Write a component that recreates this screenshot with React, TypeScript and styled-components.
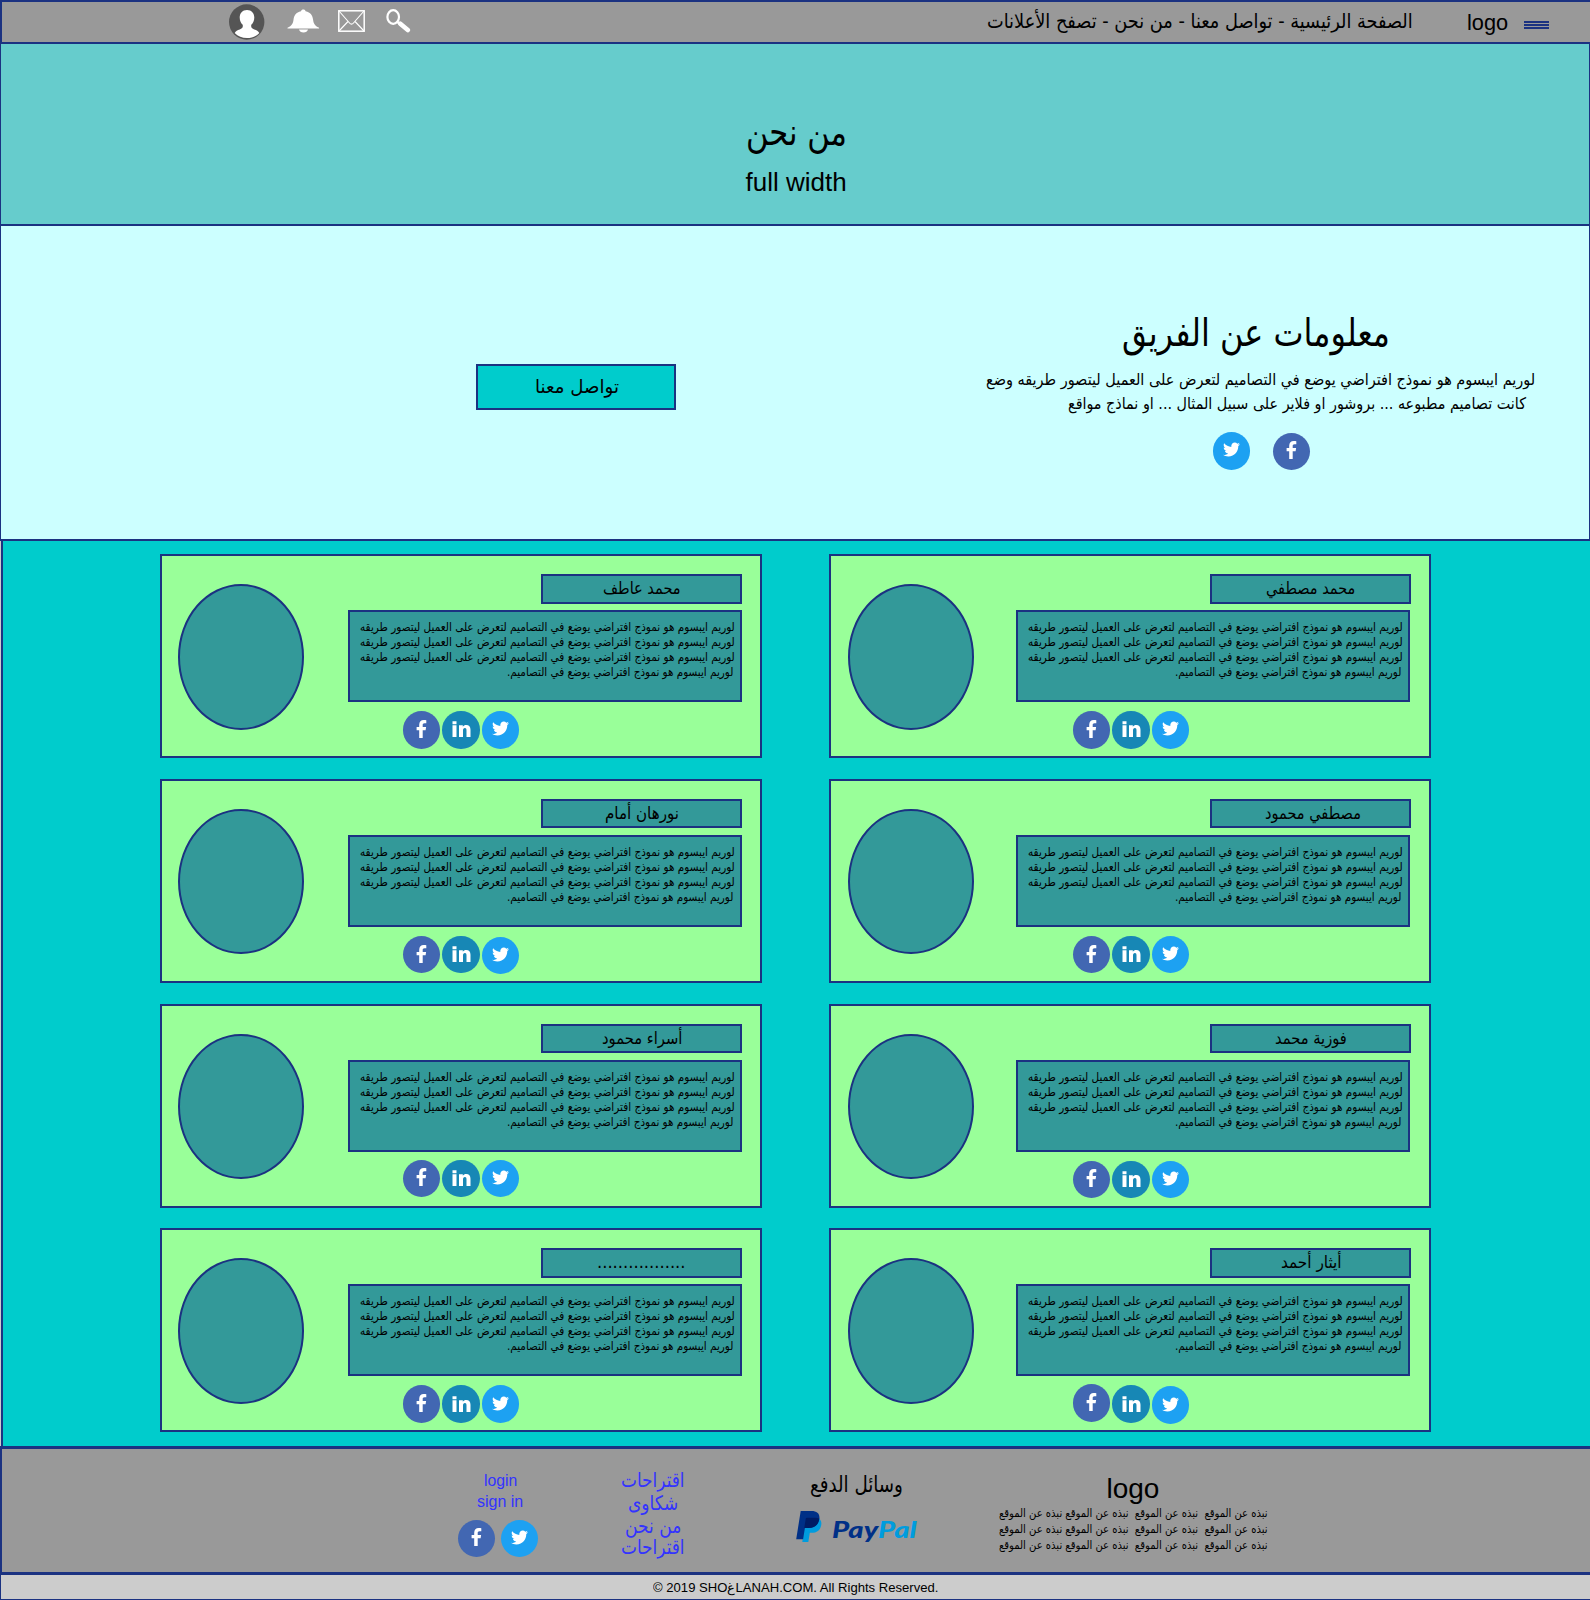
import React, { useLayoutEffect, useRef, useState } from "react";
import styled, { createGlobalStyle, css } from "styled-components";
import { FaTwitter } from "react-icons/fa";

const NAVY = "#1b3281";
const ARABIC = '"DejaVu Sans Condensed", "DejaVu Sans", sans-serif';
const LATIN = '"Liberation Sans", Arial, sans-serif';

const Global = createGlobalStyle`
  * { box-sizing: border-box; }
  body { margin: 0; background: #ccc; }
`;

/* ---------- text fitted to a measure ---------- */

const LineBox = styled.div<{ $w: number; $h: number; $size: number; $latin?: boolean; $color?: string }>`
  width: ${(p) => p.$w}px;
  height: ${(p) => p.$h}px;
  line-height: ${(p) => p.$h}px;
  font-size: ${(p) => p.$size}px;
  font-family: ${(p) => (p.$latin ? LATIN : ARABIC)};
  color: ${(p) => p.$color || "#000"};
  white-space: pre;
  text-align: left;
  flex: none;
`;

const LineInk = styled.span<{ $rtl: boolean }>`
  display: inline-block;
  direction: ${(p) => (p.$rtl ? "rtl" : "ltr")};
  transform-origin: 0 50%;
  vertical-align: top;
`;

type LineProps = {
  w: number;
  h: number;
  size: number;
  latin?: boolean;
  color?: string;
  className?: string;
  children: React.ReactNode;
};

function Line({ w, h, size, latin, color, className, children }: LineProps) {
  const ref = useRef<HTMLSpanElement>(null);
  const [scale, setScale] = useState(1);
  useLayoutEffect(() => {
    const natural = ref.current?.offsetWidth;
    if (natural) setScale(w / natural);
  }, [w, size]);
  return (
    <LineBox className={className} $w={w} $h={h} $size={size} $latin={latin} $color={color}>
      <LineInk ref={ref} $rtl={!latin} style={{ transform: `scaleX(${scale})` }}>
        {children}
      </LineInk>
    </LineBox>
  );
}

/* ---------- page frame ---------- */

const Page = styled.div`
  width: 1590px;
  height: 1600px;
  display: flex;
  flex-direction: column;
  overflow: hidden;
`;

const Header = styled.header`
  height: 44px;
  display: flex;
  align-items: flex-start;
  background: #999;
  border: 2px solid ${NAVY};
  border-right: 0;
`;

const HeaderIcons = styled.div`
  display: flex;
  align-items: flex-start;
  width: 984.5px;
  padding: 2px 0 0 226.5px;
  svg { flex: none; }
`;

const HeaderLogo = styled(Line)`
  margin-left: 54.5px;
`;

const Burger = styled.div`
  margin: 19px 0 0 15px;
  width: 25px;
  display: grid;
  gap: 1px;
  grid-auto-rows: 2px;
`;

const BurgerBar = styled.i`
  background: ${NAVY};
`;

const Hero = styled.section`
  height: 182px;
  padding: 62px 0 0 2px;
  display: flex;
  flex-direction: column;
  align-items: center;
  background: #66cccc;
  border: 1px solid ${NAVY};
  border-width: 0 1px 2px 1px;
`;

const Info = styled.section`
  height: 315px;
  display: flex;
  background: #ccffff;
  border: 1px solid ${NAVY};
  border-width: 0 1px 2px 1px;
`;

const ContactButton = styled.button`
  margin: 138px 0 0 475px;
  width: 200px;
  height: 46px;
  padding: 0 0 0 57px;
  display: flex;
  align-items: flex-start;
  background: #00cccc;
  border: 2px solid ${NAVY};
`;

const Team = styled.div`
  width: 549px;
  margin-left: 310px;
  padding-top: 76px;
`;

const TeamTitle = styled(Line)`
  margin-left: 136px;
`;

const TeamSecond = styled(Line)`
  margin-left: 82px;
`;

const TeamSocial = styled.div`
  display: flex;
  align-items: flex-start;
  gap: 22.5px;
  margin: 15px 0 0 226.5px;
`;

/* ---------- social buttons ---------- */

const BadgeShape = styled.span<{ $bg: string; $drop?: number }>`
  width: 37.5px;
  height: 37.5px;
  flex: none;
  margin-top: ${(p) => p.$drop || 0}px;
  padding: 0 0 2px 0.5px;
  border-radius: 50%;
  display: flex;
  align-items: center;
  justify-content: center;
  color: #fff;
  background: ${(p) => p.$bg};
`;

const Facebook = ({ drop }: { drop?: number }) => (
  <BadgeShape $bg="#4267b2" $drop={drop}>
    <svg width="11" height="18" viewBox="0 0 11 18">
      <path d="M3.200 18V10.200H.6V7h2.600V4.800C3.200 1.700 4.900.1 7.700.1c1.100 0 2 .1 2.600.2v2.900H8.600c-1.500 0-1.900.7-1.900 1.800v2h3.400l-.5 3.200H6.700V18z" fill="#fff" />
    </svg>
  </BadgeShape>
);

const LinkedIn = ({ drop }: { drop?: number }) => (
  <BadgeShape $bg="#1787b5" $drop={drop}>
    <svg width="19" height="17" viewBox="0 0 19 17">
      <path d="M.5 1.200h4v3h-4zM.5 5.200h4V17h-4zM7 5.200h3.800v1.500c.8-1.200 1.900-1.800 3.400-1.800 2.900 0 4.300 1.800 4.300 4.900V17h-4v-6.600c0-1.500-.5-2.300-1.600-2.300-1.300 0-1.900.9-1.900 2.400V17H7z" fill="#fff" />
    </svg>
  </BadgeShape>
);

const Twitter = ({ drop }: { drop?: number }) => (
  <BadgeShape $bg="#1da1f2" $drop={drop}><FaTwitter size={17} /></BadgeShape>
);

/* ---------- members ---------- */

const Members = styled.main`
  height: 905px;
  padding: 13px 0 0 157px;
  margin-left: 1px;
  background: #00cccc;
  border-left: 2px solid ${NAVY};
  display: grid;
  grid-template-columns: 602px 602px;
  grid-auto-rows: 204px;
  gap: 20.8px 67px;
`;

const teal = css`
  background: #339999;
  border: 2px solid ${NAVY};
`;

const Card = styled.article`
  background: #99ff99;
  border: 2px solid ${NAVY};
  display: flex;
  align-items: flex-start;
`;

const Portrait = styled.div<{ $shift: number }>`
  ${teal}
  width: 126px;
  height: 145.5px;
  border-radius: 50%;
  flex: none;
  margin: 28px 0 0 ${(p) => 16 + p.$shift}px;
`;

const Details = styled.div<{ $shift: number }>`
  width: ${(p) => 438 - p.$shift}px;
  display: flex;
  flex-direction: column;
  align-items: flex-end;
  padding-top: 18px;
`;

const NameBox = styled.div<{ $nudge: number }>`
  ${teal}
  width: 201px;
  height: 29.5px;
  padding-left: ${(p) => p.$nudge * 2}px;
  display: flex;
  justify-content: center;
`;

const BioBox = styled.div<{ $shift: number }>`
  ${teal}
  width: 394.5px;
  height: 92px;
  margin: 6.5px ${(p) => p.$shift}px 0 0;
  padding: 8px 5.5px 0 0;
  display: flex;
  flex-direction: column;
  align-items: flex-end;
`;

const BioLast = styled(Line)`
  margin-right: 2px;
`;

const CardSocial = styled.div<{ $shift: number }>`
  display: flex;
  align-items: flex-start;
  gap: 2px;
  margin: 9px ${(p) => 223 - p.$shift}px 0 0;
`;

/* ---------- footer ---------- */

const Footer = styled.footer`
  height: 129px;
  display: flex;
  align-items: flex-start;
  background: #999;
  border: 3px solid ${NAVY};
  border-width: 3px 0 3px 2px;
`;

const Account = styled.div`
  width: 82px;
  margin: 21px 0 0 455px;
`;

const LoginLine = styled(Line)`
  margin-left: 27px;
`;

const SignInLine = styled(Line)`
  margin-left: 20px;
`;

const AccountSocial = styled.div`
  display: flex;
  gap: 5.5px;
  margin: 7.5px 0 0 0.5px;
`;

const Links = styled.nav`
  width: 64px;
  margin: 19px 0 0 82px;
  display: flex;
  flex-direction: column;
  align-items: center;
`;

const Payment = styled.div`
  width: 122px;
  margin: 19px 0 0 111px;
`;

const PaymentTitle = styled(Line)`
  margin-left: 14px;
`;

const PayPal = styled.div`
  display: flex;
  margin-top: 9px;
  align-items: flex-start;
`;

const Wordmark = styled(Line)`
  margin: 7px 0 0 10px;
  font-family: Lato, "Open Sans", sans-serif;
  font-style: italic;
  font-weight: 900;
  em { color: #009cde; }
`;

const About = styled.div`
  width: 269px;
  margin: 24.5px 0 0 81px;
`;

const AboutLogo = styled(Line)`
  margin: 0 0 1.5px 107.5px;
`;

const Legal = styled.div`
  height: 25px;
  display: flex;
  justify-content: center;
  background: #ccc;
  border: 1px solid ${NAVY};
  border-width: 0 0 1px 1px;
`;

/* ---------- drawings ---------- */

const UserIcon = () => (
  <svg width="36" height="36" viewBox="0 0 36 36">
    <circle cx="17.700" cy="18" r="17.700" fill="#555" />
    <path d="M18 6c4.600 0 7.300 3.200 7.300 7.500 0 3.300-1.300 5.900-3 7.300-.5 2.700.4 3.800 3 4.700 2.200.8 4 1.600 5 3.500C27 32.500 23 34 18 34S9 32.500 5.700 29c1-1.900 2.800-2.700 5-3.500 2.600-.9 3.500-2 3-4.700-1.700-1.400-3-4-3-7.300C10.700 9.200 13.400 6 18 6z" fill="#fff" />
  </svg>
);

const BellIcon = () => (
  <svg width="33" height="24" viewBox="0 0 33 24" style={{ margin: "5px 0 0 22.500px" }}>
    <path d="M14 2.300C14.200 1 15.200.4 16.300.4s2.100.6 2.300 1.900c5 1 7 4.300 7.500 8.400.4 3.600 1.500 6 6 8v.9H.5v-.9c4.500-2 5.600-4.400 6-8C7 6.600 9 3.300 14 2.300zM12 20.600h9c-.5 1.800-2.200 2.900-4.500 2.900S12.500 22.400 12 20.600z" fill="#fff" />
  </svg>
);

const MailIcon = () => (
  <svg width="27" height="22" viewBox="0 0 27 22" style={{ margin: "6px 0 0 18px" }} fill="none" stroke="#fff">
    <rect x=".8" y=".8" width="25.400" height="20.400" strokeWidth="1.500" />
    <path d="M1 1l10.500 12c1.300 1.500 2.700 1.500 4 0L26 1M1 21l9-9.500M26 21l-9-9.500" strokeWidth="1.100" />
  </svg>
);

const SearchIcon = () => (
  <svg width="25" height="24" viewBox="0 0 25 24" style={{ margin: "4.500px 0 0 21px" }} fill="none" stroke="#fff">
    <ellipse cx="7.200" cy="8" rx="5.800" ry="6.800" strokeWidth="2.200" />
    <path d="M11.500 13l2.500 2" strokeWidth="2.400" />
    <path d="M14.300 14.800l7.500 6.300" strokeWidth="4.600" strokeLinecap="round" />
  </svg>
);

const PayPalMark = () => (
  <svg width="26" height="32" viewBox="0 0 26 32">
    <path d="M9.500 7h12.800c2.600 1.700 3.500 4.200 2.900 7.200-1 5.200-4.500 7.600-9.700 7.600h-1.700l-1.500 9.200H6.300z" fill="#009cde" />
    <path d="M4.700 0h10.800c5.800 0 8.700 3 7.800 8.300-.9 5.700-4.800 8.700-10.800 8.700H8.900L7.100 28.300H.2z" fill="#003087" />
    <path d="M9.700 7.800c.1-.6.600-1 1.200-1h8.500c1.300 0 2.600.2 3.800.7-.8 6.300-4.700 9.500-10.700 9.500H8.300z" fill="#001c64" />
  </svg>
);

/* ---------- content ---------- */

const BIO = "لوريم ايبسوم هو نموذج افتراضي يوضع في التصاميم لتعرض على العميل ليتصور طريقه";
const BIO_END = "لوريم ايبسوم هو نموذج افتراضي يوضع في التصاميم.";
const ABOUT = "نبذه عن الموقع  نبذه عن الموقع  نبذه عن الموقع نبذه عن الموقع";

type Member = { name: string; w: number; nudge?: number; fb?: number; li?: number; tw?: number };

const members: Member[] = [
  { name: "محمد عاطف", w: 78 },
  { name: "محمد مصطفي", w: 89 },
  { name: "نورهان أمام", w: 74 },
  { name: "مصطفي محمود", w: 96, nudge: 2.5, tw: 0 },
  { name: "أسراء محمود", w: 80, fb: -1, li: -1, tw: -1 },
  { name: "فوزية محمد", w: 72 },
  { name: ".................", w: 89 },
  { name: "أيثار أحمد", w: 61, nudge: 1, fb: -1, tw: 1 },
];

function MemberCard({ member, right }: { member: Member; right: boolean }) {
  const s = right ? 1 : 0;
  return (
    <Card>
      <Portrait $shift={s} />
      <Details $shift={s}>
        <NameBox $nudge={member.nudge || 0}>
          <Line w={member.w} h={24} size={17}>{member.name}</Line>
        </NameBox>
        <BioBox $shift={s}>
          <Line w={375} h={15} size={12}>{BIO}</Line>
          <Line w={375} h={15} size={12}>{BIO}</Line>
          <Line w={375} h={15} size={12}>{BIO}</Line>
          <BioLast w={226} h={15} size={12}>{BIO_END}</BioLast>
        </BioBox>
        <CardSocial $shift={s}>
          <Facebook drop={member.fb} />
          <LinkedIn drop={member.li} />
          <Twitter drop={member.tw} />
        </CardSocial>
      </Details>
    </Card>
  );
}

export default function App() {
  return (
    <>
      <Global />
      <Page>
        <Header>
          <HeaderIcons>
            <UserIcon />
            <BellIcon />
            <MailIcon />
            <SearchIcon />
          </HeaderIcons>
          <Line w={426} h={39} size={20}>
            الصفحة الرئيسية - تواصل معنا - من نحن - تصفح الأعلانات
          </Line>
          <HeaderLogo w={41.5} h={41} size={22} latin>logo</HeaderLogo>
          <Burger>
            <BurgerBar />
            <BurgerBar />
            <BurgerBar />
          </Burger>
        </Header>
        <Hero>
          <Line w={101} h={54} size={37}>من نحن</Line>
          <Line w={101} h={44} size={26} latin>full width</Line>
        </Hero>
        <Info>
          <ContactButton>
            <Line w={84} h={41} size={19}>تواصل معنا</Line>
          </ContactButton>
          <Team>
            <TeamTitle w={268} h={62} size={38}>معلومات عن الفريق</TeamTitle>
            <Line w={549} h={32} size={16}>
              لوريم ايبسوم هو نموذج افتراضي يوضع في التصاميم لتعرض على العميل ليتصور طريقه وضع
            </Line>
            <TeamSecond w={458} h={16} size={16}>
              كانت تصاميم مطبوعه ... بروشور او فلاير على سبيل المثال ... او نماذج مواقع
            </TeamSecond>
            <TeamSocial>
              <Twitter drop={5} />
              <Facebook drop={5.5} />
            </TeamSocial>
          </Team>
        </Info>
        <Members>
          {members.map((m, i) => (
            <MemberCard key={m.name} member={i === 2 ? { ...m, tw: 1 } : m} right={i % 2 === 1} />
          ))}
        </Members>
        <Footer>
          <Account>
            <LoginLine w={33.5} h={21} size={16} latin color="#3333ff">login</LoginLine>
            <SignInLine w={46} h={21} size={16} latin color="#3333ff">sign in</SignInLine>
            <AccountSocial>
              <Facebook />
              <Twitter />
            </AccountSocial>
          </Account>
          <Links>
            <Line w={64} h={24} size={20} color="#3333ff">اقتراحات</Line>
            <Line w={50} h={22} size={20} color="#3333ff">شكاوى</Line>
            <Line w={56} h={24} size={20} color="#3333ff">من نحن</Line>
            <Line w={64} h={18} size={20} color="#3333ff">اقتراحات</Line>
          </Links>
          <Payment>
            <PaymentTitle w={93} h={34} size={22}>وسائل الدفع</PaymentTitle>
            <PayPal>
              <PayPalMark />
              <Wordmark w={85} h={24} size={22} latin color="#003087">Pay<em>Pal</em></Wordmark>
            </PayPal>
          </Payment>
          <About>
            <AboutLogo w={53} h={30} size={28} latin>logo</AboutLogo>
            <Line w={269} h={16} size={11.5}>{ABOUT}</Line>
            <Line w={269} h={16} size={11.5}>{ABOUT}</Line>
            <Line w={269} h={16} size={11.5}>{ABOUT}</Line>
          </About>
        </Footer>
        <Legal>
          <Line w={285} h={25} size={13} latin>© 2019 SHOغLANAH.COM. All Rights Reserved.</Line>
        </Legal>
      </Page>
    </>
  );
}
